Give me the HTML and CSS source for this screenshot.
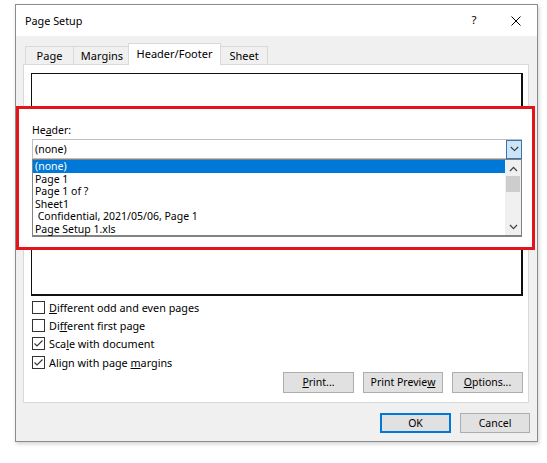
FILE: index.html
```html
<!DOCTYPE html>
<html>
<head>
<meta charset="utf-8">
<title>Page Setup</title>
<link rel="stylesheet" href="styles.css">
</head>
<body>
<div class="dialog">
  <div class="titlebar">
    <span class="title">Page Setup</span>
    <span class="caption-btn help">?</span>
    <span class="caption-btn close">
      <svg width="10" height="10" viewBox="0 0 10 10"><path d="M0.5 0.5 L9.5 9.5 M9.5 0.5 L0.5 9.5" stroke="#000" stroke-width="1" fill="none"/></svg>
    </span>
  </div>
  <div class="dlg-body">
    <div class="tabs">
      <span class="tab tab-page">Page</span>
      <span class="tab tab-margins">Margins</span>
      <span class="tab tab-hf active">Header/Footer</span>
      <span class="tab tab-sheet">Sheet</span>
    </div>
    <div class="panel">
      <div class="preview"></div>
      <div class="checks">
        <label class="check"><span class="box"></span><span><u>D</u>ifferent odd and even pages</span></label>
        <label class="check"><span class="box"></span><span>Di<u>f</u>ferent first page</span></label>
        <label class="check"><span class="box"><svg width="11" height="11" viewBox="0 0 11 11"><path d="M1.5 5.5 L4 8 L9.5 2.5" stroke="#333" stroke-width="1.1" fill="none"/></svg></span><span>Sca<u>l</u>e with document</span></label>
        <label class="check"><span class="box"><svg width="11" height="11" viewBox="0 0 11 11"><path d="M1.5 5.5 L4 8 L9.5 2.5" stroke="#333" stroke-width="1.1" fill="none"/></svg></span><span>Align with page <u>m</u>argins</span></label>
      </div>
      <div class="panel-buttons">
        <span class="btn w71"><u>P</u>rint...</span>
        <span class="btn w80">Print Previe<u>w</u></span>
        <span class="btn w71"><u>O</u>ptions...</span>
      </div>
    </div>
    <div class="dlg-buttons">
      <span class="btn w71 default">OK</span>
      <span class="btn w70">Cancel</span>
    </div>
  </div>
</div>

<div class="highlight-box">
  <div class="field-label">He<u>a</u>der:</div>
  <div class="combo">
    <span class="combo-text">(none)</span>
    <span class="combo-drop">
      <svg width="9" height="6" viewBox="0 0 9 6"><path d="M0.8 1 L4.5 4.6 L8.2 1" stroke="#333" stroke-width="1.1" fill="none"/></svg>
    </span>
  </div>
  <div class="dropdown">
    <ul class="items">
      <li class="selected">(none)</li>
      <li>Page 1</li>
      <li>Page 1 of ?</li>
      <li>Sheet1</li>
      <li> Confidential, 2021/05/06, Page 1</li>
      <li>Page Setup 1.xls</li>
    </ul>
    <div class="scrollbar">
      <span class="arrow">
        <svg width="9" height="6" viewBox="0 0 9 6"><path d="M1 5 L4.5 1.4 L8 5" stroke="#444" stroke-width="1.3" fill="none"/></svg>
      </span>
      <span class="thumb"></span>
      <span class="track"></span>
      <span class="arrow">
        <svg width="9" height="6" viewBox="0 0 9 6"><path d="M1 1 L4.5 4.6 L8 1" stroke="#444" stroke-width="1.3" fill="none"/></svg>
      </span>
    </div>
  </div>
</div>
</body>
</html>
```

FILE: styles.css
```css
* { box-sizing: border-box; }

html, body {
  margin: 0;
  padding: 0;
}

body {
  position: relative;
  width: 547px;
  height: 463px;
  overflow: hidden;
  background: #ffffff;
  font-family: "Noto Sans", "Open Sans", sans-serif;
  font-size: 10.5px;
  color: #000;
}

u { text-decoration: underline; text-underline-offset: 1px; }

.dialog {
  margin: 4px 0 0 15px;
  width: 523px;
  height: 438px;
  border: 1px solid #8c8c8c;
  box-shadow: 1px 2px 4px rgba(0,0,0,0.18);
  background: #f0f0f0;
  display: flex;
  flex-direction: column;
}

.titlebar {
  height: 31px;
  background: #ffffff;
  display: flex;
  align-items: center;
}

.title {
  flex: 1;
  padding-left: 9px;
  font-size: 10.8px;
  padding-bottom: 1px;
}

.caption-btn {
  width: 42px;
  height: 31px;
  display: flex;
  align-items: center;
  justify-content: center;
}

.help { font-size: 11.5px; padding-bottom: 2px; }

.dlg-body {
  flex: 1;
  padding: 7px 8px 0 7px;
  display: flex;
  flex-direction: column;
}

.tabs {
  height: 21px;
  display: flex;
  align-items: flex-end;
  padding-left: 2px;
}

.tab {
  height: 18px;
  border: 1px solid #d9d9d9;
  border-bottom: none;
  margin-right: -1px;
  display: flex;
  align-items: center;
  justify-content: center;
  background: #f0f0f0;
  line-height: 1;
  font-size: 11px;
}

.tab-page { width: 49px; }
.tab-margins { width: 58px; }
.tab-hf { width: 93px; }
.tab-sheet { width: 48px; }

.tab.active {
  height: 22px;
  background: #fff;
  margin: 0 -1px -1px -2px;
  padding-bottom: 2px;
  position: relative;
  z-index: 1;
}

.panel {
  height: 339px;
  border: 1px solid #d9d9d9;
  background: #fff;
  padding: 8px 5px 0 7px;
  display: flex;
  flex-direction: column;
}

.preview {
  height: 223px;
  border-top: 1px solid #111;
  border-left: 1px solid #111;
  border-right: 2px solid #111;
  border-bottom: 2px solid #111;
}

.checks {
  margin-top: 2px;
  display: flex;
  flex-direction: column;
}

.check {
  height: 18.3px;
  display: flex;
  align-items: center;
  gap: 4px;
  padding-left: 1px;
  font-size: 10.8px;
}

.box {
  width: 13px;
  height: 13px;
  border: 1px solid #333;
  background: #fff;
  display: flex;
  align-items: center;
  justify-content: center;
}

.panel-buttons {
  margin-top: 1px;
  display: flex;
  justify-content: flex-end;
  gap: 9px;
}

.btn {
  height: 21px;
  background: #e1e1e1;
  border: 1px solid #adadad;
  display: flex;
  align-items: center;
  justify-content: center;
  padding-bottom: 1px;
}

.w70 { width: 70px; }
.w71 { width: 71px; }
.w80 { width: 80px; }

.dlg-buttons {
  margin-top: 10px;
  margin-right: -1px;
  display: flex;
  justify-content: flex-end;
  gap: 9px;
}

.dlg-buttons .btn { height: 20px; }

.btn.default {
  border: 2px solid #0078d7;
}

/* annotation box drawn over the dialog */
.highlight-box {
  position: absolute;
  left: 16px;
  top: 106px;
  width: 519px;
  height: 144px;
  border: 3px solid #e3141c;
  background: #fff;
  padding: 14px 0 0 13px;
}

.field-label {
  height: 14px;
  line-height: 14px;
  margin-bottom: 2px;
}

.combo {
  width: 490px;
  height: 20px;
  border: 1px solid #bfbfbf;
  display: flex;
  align-items: center;
}

.combo-text {
  flex: 1;
  padding-left: 2px;
  padding-bottom: 1px;
}

.combo-drop {
  width: 16px;
  height: 19px;
  margin-top: -1px;
  margin-bottom: -1px;
  margin-right: -1px;
  border: 1px solid #3d74a8;
  background: #cce4f7;
  display: flex;
  align-items: center;
  justify-content: center;
}

.dropdown {
  width: 490px;
  height: 78px;
  border: 1px solid #828282;
  border-bottom-width: 2px;
  display: flex;
}

.items {
  flex: 1;
  list-style: none;
  margin: 0;
  padding: 0;
}

.items li {
  height: 12.5px;
  line-height: 12.5px;
  padding-left: 2px;
  white-space: pre;
}

.items li.selected {
  background: #0078d7;
  color: #fff;
}

.scrollbar {
  width: 16px;
  background: #f0f0f0;
  display: flex;
  flex-direction: column;
  padding: 1px;
}

.arrow {
  height: 15px;
  display: flex;
  align-items: center;
  justify-content: center;
}

.thumb {
  height: 16px;
  background: #cdcdcd;
}

.track { flex: 1; }
```
